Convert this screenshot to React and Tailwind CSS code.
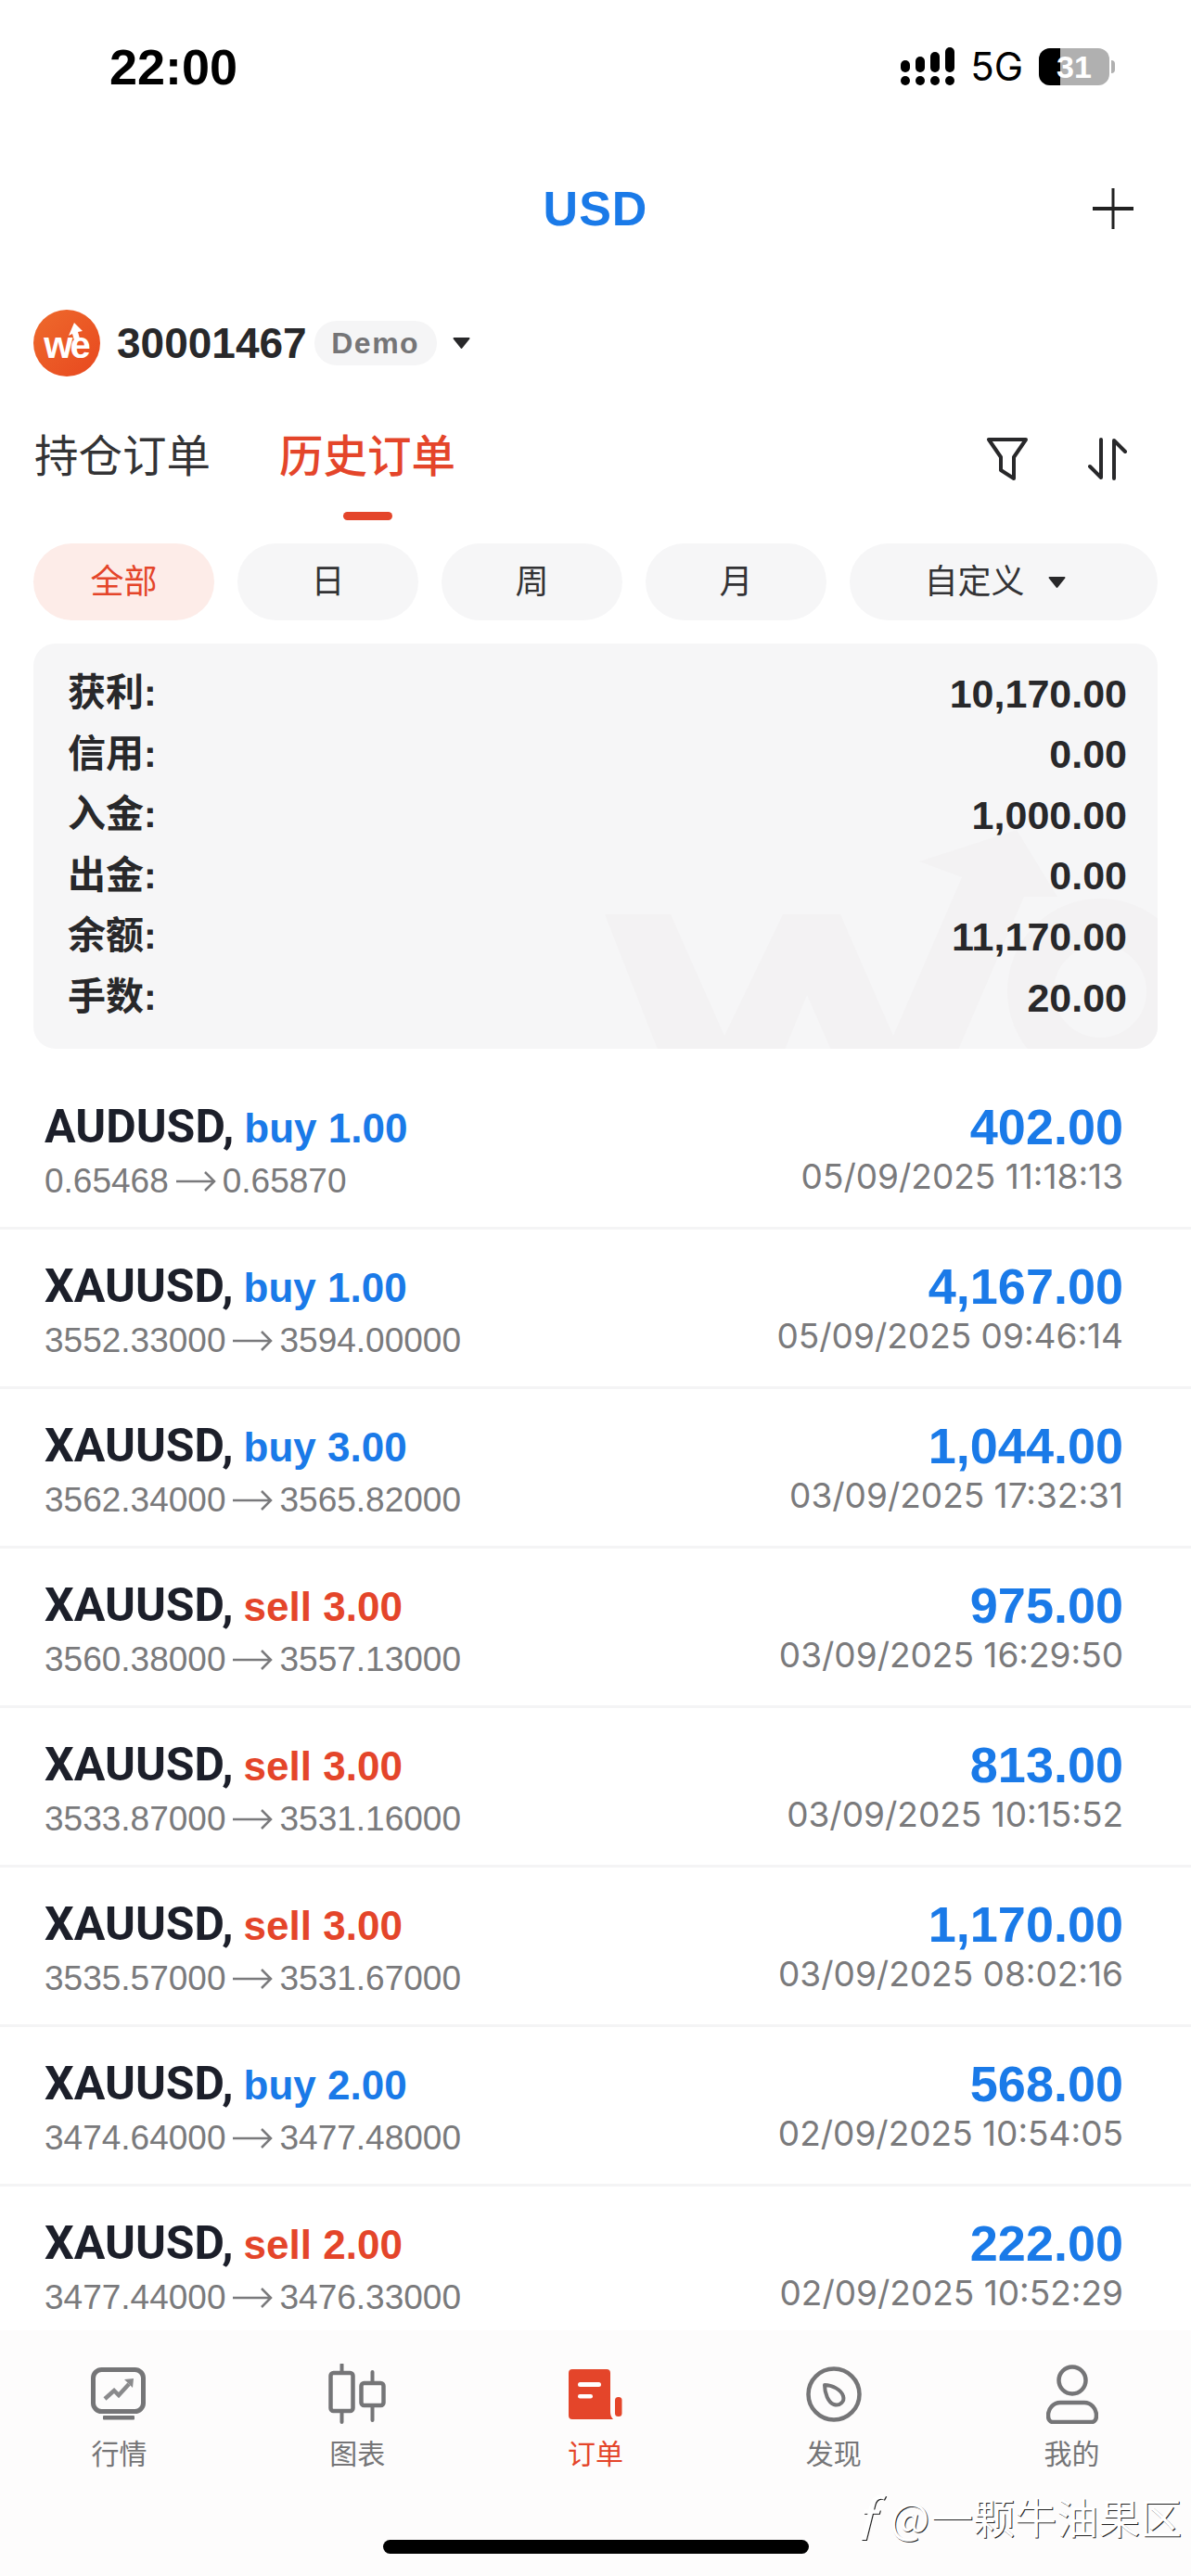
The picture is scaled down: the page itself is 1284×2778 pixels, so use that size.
import React from "react";

const summary = [
  ["获利:", "10,170.00"],
  ["信用:", "0.00"],
  ["入金:", "1,000.00"],
  ["出金:", "0.00"],
  ["余额:", "11,170.00"],
  ["手数:", "20.00"],
];

const orders = [
  ["AUDUSD,", "buy 1.00", "0.65468", "0.65870", "402.00", "05/09/2025 11:18:13"],
  ["XAUUSD,", "buy 1.00", "3552.33000", "3594.00000", "4,167.00", "05/09/2025 09:46:14"],
  ["XAUUSD,", "buy 3.00", "3562.34000", "3565.82000", "1,044.00", "03/09/2025 17:32:31"],
  ["XAUUSD,", "sell 3.00", "3560.38000", "3557.13000", "975.00", "03/09/2025 16:29:50"],
  ["XAUUSD,", "sell 3.00", "3533.87000", "3531.16000", "813.00", "03/09/2025 10:15:52"],
  ["XAUUSD,", "sell 3.00", "3535.57000", "3531.67000", "1,170.00", "03/09/2025 08:02:16"],
  ["XAUUSD,", "buy 2.00", "3474.64000", "3477.48000", "568.00", "02/09/2025 10:54:05"],
  ["XAUUSD,", "sell 2.00", "3477.44000", "3476.33000", "222.00", "02/09/2025 10:52:29"],
];

function Caret({ className }) {
  return (
    <svg viewBox="0 0 20 14" className={className}>
      <path d="M2 2h16L10 12z" fill="currentColor" stroke="currentColor" strokeWidth="2" strokeLinejoin="round" />
    </svg>
  );
}

function Row({ order, last }) {
  const [symbol, side, open, close, profit, date] = order;
  return (
    <div className={`flex justify-between pl-[48px] pr-[73px] h-[172px] pt-[32px] ${last ? "" : "border-b-[3px] border-[#f4f4f5]"}`}>
      <div>
        <div className="flex items-baseline h-[58px]">
          <span className="text-[50px] font-bold font-['Roboto',sans-serif] text-[#1c1f2a] leading-[58px]">{symbol}</span>
          <span className={`ml-[11px] text-[44px] font-bold leading-[58px] ${side.startsWith("buy") ? "text-[#1a7ae8]" : "text-[#e4452a]"}`}>{side}</span>
        </div>
        <div className="flex items-center mt-[8px] text-[37px] leading-[44px] text-[#7a7a7c]">
          <span>{open}</span>
          <svg viewBox="0 0 44 24" className="w-[44px] h-[24px] mx-[7px]" fill="none" stroke="currentColor" strokeWidth="2.5">
            <path d="M1 12h41M32 2l10 10-10 10" />
          </svg>
          <span>{close}</span>
        </div>
      </div>
      <div className="text-right">
        <div className="text-[54px] font-bold text-[#1a7ae8] leading-[58px]">{profit}</div>
        <div className="mt-[3px] text-[37px] font-['Inter',sans-serif] leading-[44px] text-[#7a7a7c]">{date}</div>
      </div>
    </div>
  );
}

function TabItem({ label, active, children }) {
  return (
    <div className={`flex-1 flex flex-col items-center ${active ? "text-[#e4452a]" : "text-[#757577]"}`}>
      <div className="h-[66px] flex items-center justify-center">{children}</div>
      <div className="mt-[14px] text-[30px] leading-[36px]">{label}</div>
    </div>
  );
}

export default function App() {
  return (
    <div className="relative w-[1284px] h-[2778px] overflow-hidden bg-white font-['Liberation_Sans','Noto_Sans_CJK_SC',sans-serif]">
      <div className="flex justify-between items-center h-[144px] pl-[118px] pr-[82px]">
        <span className="text-[54px] font-bold text-black leading-none">22:00</span>
        <div className="flex items-center">
          <svg viewBox="0 0 60 42" className="w-[60px] h-[42px]" fill="#000">
            <rect x="0" y="14" width="10" height="13" rx="5" />
            <rect x="16" y="10" width="10" height="17" rx="5" />
            <rect x="32" y="5" width="10" height="22" rx="5" />
            <rect x="48" y="0" width="10" height="27" rx="5" />
            <circle cx="5" cy="36" r="5" />
            <circle cx="21" cy="36" r="5" />
            <circle cx="37" cy="36" r="5" />
            <circle cx="53" cy="36" r="5" />
          </svg>
          <span className="ml-[15px] text-[42px] text-black font-['Inter',sans-serif] leading-none">5G</span>
          <div className="relative ml-[17px] w-[76px] h-[40px] rounded-[12px] bg-[#b0b0b0] overflow-hidden flex items-center justify-center">
            <div className="absolute left-0 top-0 bottom-0 w-[23px] bg-black" />
            <span className="relative text-[34px] font-bold text-white leading-none">31</span>
          </div>
          <div className="ml-[2px] w-[4px] h-[14px] rounded-r-full bg-[#b0b0b0]" />
        </div>
      </div>

      <div className="relative flex justify-center items-center h-[110px] mt-[26px]">
        <span className="text-[52px] font-bold text-[#1a7ae8] tracking-[1px]">USD</span>
        <svg viewBox="0 0 44 44" className="absolute right-[62px] top-[33px] w-[44px] h-[44px]" stroke="#222" fill="none">
          <path d="M0 22h44" strokeWidth="4" />
          <path d="M22 0v44" strokeWidth="3" />
        </svg>
      </div>

      <div className="flex items-center mt-[54px] pl-[36px] h-[72px]">
        <svg viewBox="0 0 72 72" className="w-[72px] h-[72px]">
          <defs>
            <linearGradient id="logoFill" x1="0" y1="0" x2="1" y2="1">
              <stop offset="0" stopColor="#ee6a2c" />
              <stop offset="1" stopColor="#e8481f" />
            </linearGradient>
          </defs>
          <circle cx="36" cy="36" r="36" fill="url(#logoFill)" />
          <path d="M38 28l6-14 9 9-5 1 2 7-6 2-2-7z" fill="#fff" />
          <text x="35" y="52" textAnchor="middle" fontSize="40" fontWeight="700" fill="#fff" fontFamily="Liberation Sans" letterSpacing="-3">we</text>
        </svg>
        <span className="ml-[18px] text-[46px] font-bold text-[#28282a] leading-none">30001467</span>
        <span className="ml-[8px] flex items-center justify-center w-[132px] h-[48px] rounded-full bg-[#f5f5f6] text-[32px] font-bold tracking-[1.5px] text-[#757577]">Demo</span>
        <Caret className="ml-[16px] w-[21px] h-[14px] text-[#28282a]" />
      </div>

      <div className="relative flex items-center mt-[51px] pl-[37px] pr-[69px] h-[72px]">
        <span className="text-[47.5px] text-[#333335] leading-none">持仓订单</span>
        <span className="ml-[74px] text-[47.5px] text-[#e4452a] font-medium leading-none">历史订单</span>
        <div className="ml-auto mt-[4px] flex items-center gap-[64px]">
          <svg viewBox="0 0 46 46" className="w-[46px] h-[46px]" fill="none" stroke="#28282a" strokeWidth="4" strokeLinejoin="round">
            <path d="M3 2h40L30 21v23L16 35V21z" />
          </svg>
          <svg viewBox="0 0 42 46" className="w-[42px] h-[46px]" fill="none" stroke="#28282a" strokeWidth="4" strokeLinecap="round" strokeLinejoin="round">
            <path d="M14 2v41L2 31M28 44V3l12 12" />
          </svg>
        </div>
        <div className="absolute left-[370px] top-[95px] w-[53px] h-[9px] rounded-full bg-[#e4452a]" />
      </div>

      <div className="flex gap-[25px] mt-[57px] px-[36px]">
        <div className="w-[195px] h-[83px] rounded-full bg-[#fdece8] text-[#e4452a] text-[36px] flex items-center justify-center">全部</div>
        {["日", "周", "月"].map((d) => (
          <div key={d} className="w-[195px] h-[83px] rounded-full bg-[#f6f6f7] text-[#333335] text-[36px] flex items-center justify-center">{d}</div>
        ))}
        <div className="flex-1 h-[83px] pr-[18px] rounded-full bg-[#f6f6f7] text-[#333335] text-[36px] flex items-center justify-center">
          自定义
          <Caret className="ml-[24px] w-[21px] h-[14px] text-[#28282a]" />
        </div>
      </div>

      <div className="relative mx-[36px] mt-[25px] h-[437px] rounded-[24px] bg-[#f6f6f7] overflow-hidden pl-[37px] pr-[33px] pt-[21px]">
        <svg viewBox="0 0 1212 437" className="absolute inset-0 w-full h-full" fill="#f3f2f3">
          <path d="M616 292H687L745 423 808 292H870L927 423 1001 252 955 235 1060 201 1104 273H1068L995 443H862L834 379 808 443H675z" />
          <circle cx="1150" cy="375" r="75" fill="none" stroke="#f3f2f3" strokeWidth="50" />
        </svg>
        {summary.map(([label, value]) => (
          <div key={label} className="relative flex items-center justify-between h-[65.6px]">
            <span className="text-[41px] font-bold text-[#28282a]">{label}</span>
            <span className="text-[43px] font-bold text-[#28282a]">{value}</span>
          </div>
        ))}
      </div>

      <div className="mt-[23px]">
        {orders.map((o, i) => (
          <Row key={i} order={o} last={i === orders.length - 1} />
        ))}
      </div>

      <div className="absolute left-0 right-0 bottom-0 h-[265px] bg-[#fdfcfc] pt-[36px]">
        <div className="flex">
          <TabItem label="行情">
            <svg viewBox="0 0 60 66" className="w-[60px] h-[66px]" fill="none" stroke="currentColor">
              <rect x="2.5" y="6.5" width="54" height="45" rx="9" strokeWidth="5" />
              <path d="M15 38l10-9 5 5 11-12" strokeWidth="4.5" stroke="#8a8a8c" />
              <path d="M36 17l10-1-1 10z" fill="#8a8a8c" stroke="none" />
              <rect x="13" y="56" width="34" height="4.5" rx="1" fill="currentColor" stroke="none" />
            </svg>
          </TabItem>
          <TabItem label="图表">
            <svg viewBox="0 0 62 66" className="w-[62px] h-[66px]" fill="none" stroke="currentColor" strokeWidth="4.5">
              <rect x="2.5" y="10" width="24" height="41" rx="3" />
              <rect x="35.5" y="21" width="24" height="24" rx="3" />
              <path d="M14.5 1v9M14.5 51v12M47.5 9v12M47.5 45v16" strokeWidth="4" strokeLinecap="round" />
            </svg>
          </TabItem>
          <TabItem label="订单" active>
            <svg viewBox="0 0 58 54" className="w-[58px] h-[54px]">
              <path d="M4 0h37a4 4 0 0 1 4 4v42c0 3 1 6 3 8H4a4 4 0 0 1-4-4V4a4 4 0 0 1 4-4z" fill="currentColor" />
              <rect x="10" y="14" width="25" height="5" rx="2.5" fill="#fff" />
              <rect x="10" y="27" width="16" height="4.5" rx="2.2" fill="#fff" />
              <rect x="50" y="30" width="7.5" height="21" rx="3.5" fill="currentColor" />
            </svg>
          </TabItem>
          <TabItem label="发现">
            <svg viewBox="0 0 60 60" className="w-[60px] h-[60px]" fill="none" stroke="currentColor" strokeWidth="4.5">
              <circle cx="30" cy="30" r="27.5" />
              <path d="M20 20c8 0 18 5 20 12 2 6-4 11-10 9-6-2-10-12-10-21z" strokeWidth="4" strokeLinejoin="round" />
            </svg>
          </TabItem>
          <TabItem label="我的">
            <svg viewBox="0 0 56 64" className="w-[56px] h-[64px]" fill="none" stroke="currentColor" strokeWidth="4.5">
              <circle cx="28" cy="17" r="14.5" />
              <path d="M15 41h26c7 0 13 6 13 14 0 4-2 7-5 7H7c-3 0-5-3-5-7 0-8 6-14 13-14z" strokeLinejoin="round" />
            </svg>
          </TabItem>
        </div>
      </div>

      <div className="absolute left-[413px] top-[2739px] w-[459px] h-[15px] rounded-full bg-black" />

      <div className="absolute left-[922px] top-[2683px] flex items-center text-[45px] text-white leading-none whitespace-nowrap [text-shadow:1px_1px_0_#222] font-['Noto_Sans_CJK_SC',sans-serif]">
        <span className="italic text-[60px] mr-[18px]">f</span>
        <span className="mr-[2px]">@</span>
        <span>一颗牛油果区</span>
      </div>
    </div>
  );
}
